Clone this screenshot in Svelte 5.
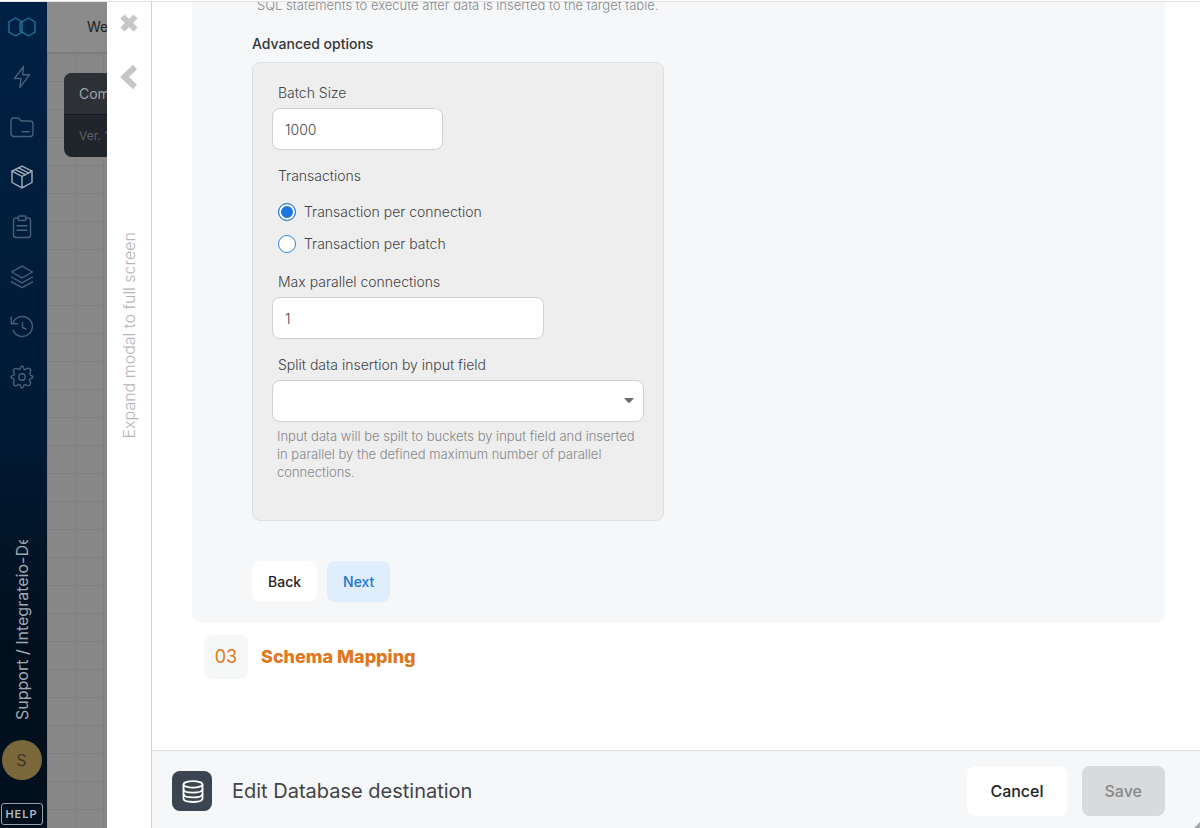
<script lang="ts">
  type TransactionMode = "connection" | "batch";

  interface NavItem {
    name: string;
    paths: string[];
    active?: boolean;
  }

  const navItems: NavItem[] = [
    {
      name: "Connections",
      paths: ["M13.5 1.5 L4.5 13.5 H11 L9.8 22.5 L19.5 9.8 H12.6 Z"],
    },
    {
      name: "Files",
      paths: [
        "M1 6 a3 3 0 0 1 3-3 h3.2 a3 3 0 0 1 2.4 1.2 l.8 1.1 a2 2 0 0 0 1.6.7 H20 a3 3 0 0 1 3 3 V18.5 a3 3 0 0 1-3 3 H4 a3 3 0 0 1-3-3 Z",
        "M12 16.8 H19",
      ],
    },
    {
      name: "Packages",
      active: true,
      paths: [
        "M12 1.2 L22 6.2 V17.5 L12 22.8 L2 17.5 V6.2 Z",
        "M2 6.2 L12 11.5 L22 6.2 M12 11.5 V22.8",
        "M5.3 4.6 L15.4 9.7 M8.6 2.9 L18.7 8",
      ],
    },
    {
      name: "Jobs",
      paths: [
        "M8 3 H6 a2.5 2.5 0 0 0-2.5 2.5 V20 A2.5 2.5 0 0 0 6 22.5 H18 a2.5 2.5 0 0 0 2.5-2.5 V5.5 A2.5 2.5 0 0 0 18 3 H16",
        "M9.5 1 H14.5 A1.5 1.5 0 0 1 16 2.5 V4 a1.5 1.5 0 0 1-1.5 1.5 H9.5 A1.5 1.5 0 0 1 8 4 V2.5 A1.5 1.5 0 0 1 9.5 1 Z",
        "M7 10.8 H17 M7 15.2 H17",
      ],
    },
    {
      name: "Layers",
      paths: [
        "M12 1.2 L22.5 7 L12 12.8 L1.5 7 Z",
        "M1.5 12 L12 17.8 L22.5 12",
        "M1.5 16.8 L12 22.6 L22.5 16.8",
      ],
    },
    {
      name: "History",
      paths: [
        "M3 8 A10 10 0 1 1 3.2 15.5",
        "M1.2 2.2 V8.7 H7.7",
        "M12.5 7.5 V12.5 L16 14",
      ],
    },
    {
      name: "Settings",
      paths: [
        "M10.4 3.4 Q10.8 1 12 1 Q13.2 1 13.6 3.4 Q14 4.8 15.4 4.4 Q15.9 4.2 16.5 3.8 Q18.4 2.6 19.6 3.6 Q21.4 4.8 20.2 7.5 Q19.2 9.2 20.4 10.2 Q23 10.8 23 12 Q23 13.2 20.6 13.6 Q19.2 14 19.6 15.4 Q21.4 18.4 20.2 19.6 Q19 21.2 16.5 20.2 Q14.8 19.2 13.8 20.4 Q13.2 23 12 23 Q10.8 23 10.4 20.6 Q10 19.2 8.6 19.6 Q5.6 21.4 4.4 20.2 Q2.8 19 3.8 16.5 Q4.8 14.8 3.6 13.8 Q1 13.2 1 12 Q1 10.8 3.4 10.4 Q4.8 10 4.4 8.6 Q2.6 5.6 3.8 4.4 Q5 2.8 7.5 3.8 Q9.6 5 10.4 3.4 Z",
        "M15.2 12 A3.2 3.2 0 1 1 8.8 12 A3.2 3.2 0 1 1 15.2 12",
      ],
    },
  ];

  let batchSize = $state("1000");
  let transactionMode = $state<TransactionMode>("connection");
  let maxConnections = $state("1");
  let splitField = $state("");
</script>

<div class="app">
  <aside class="sidebar">
    <a class="logo" href="#home" aria-label="Home">
      <svg width="28" height="20" viewBox="0 0 28 20">
        <path d="M7.5 1 L14 4.8 V15.2 L7.5 19 L1 15.2 V4.8 Z" />
        <path d="M20.5 1 L27 4.8 V15.2 L20.5 19 L14 15.2 L12 14 V6 L14 4.8 Z" />
      </svg>
    </a>
    <nav>
      {#each navItems as item (item.name)}
        <a class="nav-link" class:active={item.active} href="#{item.name}" aria-label={item.name}>
          <svg width="24" height="24" viewBox="0 0 24 24">
            {#each item.paths as d (d)}
              <path {d} />
            {/each}
          </svg>
        </a>
      {/each}
    </nav>
    <div class="account">Support / Integrateio-Dev</div>
    <div class="avatar">S</div>
    <button class="help" type="button">HELP</button>
  </aside>

  <div class="workspace">
    <header class="workspace-header">We</header>
    <div class="node">
      <div class="node-title">Com</div>
      <div class="node-version">Ver. 1</div>
    </div>
  </div>

  <div class="rail">
    <button type="button" aria-label="Close">
      <svg width="20" height="20" viewBox="0 0 20 20">
        <path d="M3.5 3.5 L16.5 16.5 M16.5 3.5 L3.5 16.5" />
      </svg>
    </button>
    <button type="button" aria-label="Collapse">
      <svg width="20" height="26" viewBox="0 0 20 26">
        <path d="M16 3 L5.5 13 L16 23" />
      </svg>
    </button>
    <button class="expand" type="button">Expand modal to full screen</button>
  </div>

  <main class="modal">
    <div class="modal-body">
      <section class="panel">
        <p class="hint">SQL statements to execute after data is inserted to the target table.</p>
        <h3>Advanced options</h3>
        <div class="options">
          <label class="label" for="batch-size">Batch Size</label>
          <input id="batch-size" class="control short" type="text" bind:value={batchSize} />

          <div class="label" id="transactions">Transactions</div>
          <div class="radios" role="radiogroup" aria-labelledby="transactions">
            <label class="radio">
              <input type="radio" name="transaction" value="connection" bind:group={transactionMode} />
              Transaction per connection
            </label>
            <label class="radio">
              <input type="radio" name="transaction" value="batch" bind:group={transactionMode} />
              Transaction per batch
            </label>
          </div>

          <label class="label" for="max-connections">Max parallel connections</label>
          <input id="max-connections" class="control medium" type="text" bind:value={maxConnections} />

          <label class="label" for="split-field">Split data insertion by input field</label>
          <div class="select">
            <select id="split-field" class="control" bind:value={splitField}>
              <option value=""></option>
            </select>
            <svg width="10" height="5" viewBox="0 0 10 5">
              <path d="M0 0 H10 L6 4.5 Q5 5.4 4 4.5 Z" />
            </svg>
          </div>
          <p class="hint">
            Input data will be spilt to buckets by input field and inserted in parallel by the
            defined maximum number of parallel connections.
          </p>
        </div>
        <div class="panel-actions">
          <button class="btn" type="button">Back</button>
          <button class="btn btn-next" type="button">Next</button>
        </div>
      </section>

      <div class="step">
        <span class="step-number">03</span>
        <h2>Schema Mapping</h2>
      </div>
    </div>

    <footer class="modal-footer">
      <span class="db-icon">
        <svg width="24" height="26" viewBox="0 0 24 26">
          <ellipse cx="13" cy="6.4" rx="9.5" ry="3.2" />
          <path d="M3.5 6.4 V20.6 C3.5 22.8 7.8 24 13 24 S22.5 22.8 22.5 20.6 V6.4" />
          <path d="M3.5 11.2 C3.5 13.4 7.8 14.6 13 14.6 S22.5 13.4 22.5 11.2" />
          <path d="M3.5 16 C3.5 18.2 7.8 19.4 13 19.4 S22.5 18.2 22.5 16" />
        </svg>
      </span>
      <h1>Edit Database destination</h1>
      <button class="btn btn-large" type="button">Cancel</button>
      <button class="btn btn-large btn-save" type="button" disabled>Save</button>
      <svg class="grip" width="6" height="6" viewBox="0 0 6 6">
        <path d="M6 0 V6 H0 Z" />
      </svg>
    </footer>
  </main>
</div>

<style>
  :global(body) {
    margin: 0;
  }

  .app {
    display: flex;
    box-sizing: border-box;
    height: 100vh;
    padding-top: 1px;
    overflow: hidden;
    background: #fff;
    color: #424446;
    font-family: Inter, sans-serif;
    font-size: 14px;
    line-height: 20px;
  }

  .app :global(*) {
    box-sizing: border-box;
  }

  h1,
  h2,
  h3,
  p {
    margin: 0;
  }

  button {
    padding: 0;
    border: 0;
    background: none;
    color: inherit;
    font: inherit;
    cursor: pointer;
  }

  svg {
    display: block;
  }

  /* Sidebar */
  .sidebar {
    display: flex;
    flex-direction: column;
    align-items: center;
    flex: 0 0 47px;
    padding: 0 4px 3px 0;
    border-top: 1px solid #e0e0e0;
    background: linear-gradient(#002144, #001a35 50%, #020f1c 80%);
  }

  .logo,
  .nav-link {
    display: flex;
    align-items: center;
    justify-content: center;
    width: 43px;
    height: 50px;
    fill: none;
    stroke: #48607a;
    stroke-width: 1.4;
    stroke-linecap: round;
    stroke-linejoin: round;
  }

  .logo {
    stroke: #1f7299;
  }

  .nav-link.active {
    stroke: #a3afba;
  }

  .account {
    height: 180px;
    margin-top: auto;
    overflow: hidden;
    color: #a0a8b1;
    font-size: 16px;
    line-height: 24px;
    white-space: nowrap;
    writing-mode: vertical-rl;
    transform: rotate(180deg);
  }

  .avatar {
    width: 40px;
    height: 40px;
    margin: 20px 0 23px;
    border-radius: 50%;
    background: #7b683a;
    color: #3c3628;
    font-size: 16px;
    line-height: 40px;
    text-align: center;
  }

  .help {
    width: 42px;
    height: 22px;
    border: 1px solid #9aa0a6;
    border-radius: 3px;
    color: #b3b7bb;
    font-size: 11px;
    font-weight: 600;
    letter-spacing: 1px;
  }

  /* Workspace behind the modal */
  .workspace {
    flex: 0 0 60px;
    overflow: hidden;
    border-top: 1px solid #e0e0e0;
    background-color: #878787;
    background-image: linear-gradient(#7e7f80 1px, transparent 1px),
      linear-gradient(90deg, #7e7f80 1px, transparent 1px);
    background-position: 0 23px;
    background-size: 28px 28px;
  }

  .workspace-header {
    height: 50px;
    padding-left: 40px;
    background: #8b8b8b;
    box-shadow: 0 1px 2px #777;
    color: #202122;
    line-height: 50px;
  }

  .node {
    width: 160px;
    margin: 21px 0 0 17px;
    border-radius: 8px;
    overflow: hidden;
    background: #20242b;
    color: #a2a3a5;
  }

  .node-title {
    height: 42px;
    padding-left: 15px;
    border-bottom: 1px solid #191b20;
    background: #2d3035;
    line-height: 42px;
  }

  .node-version {
    height: 42px;
    padding-left: 15px;
    color: #5f6268;
    font-size: 12px;
    line-height: 42px;
  }

  /* Modal rail */
  .rail {
    display: flex;
    flex-direction: column;
    align-items: center;
    flex: 0 0 45px;
    padding-top: 11px;
    border-top: 1px solid #e0e0e0;
    border-right: 1px solid #cfd2d4;
    fill: none;
    stroke: #c6c6c6;
    stroke-width: 6;
  }

  .rail button + button {
    margin-top: 31px;
  }

  .rail .expand {
    margin-top: 142px;
    color: #b5b5b5;
    font-size: 16px;
    font-weight: 300;
    white-space: nowrap;
    writing-mode: vertical-rl;
    transform: rotate(180deg);
  }

  /* Modal */
  .modal {
    display: flex;
    flex: 1;
    flex-direction: column;
    min-width: 0;
    border-top: 1px solid #e0e0e0;
  }

  .modal-body {
    display: flex;
    flex: 1;
    flex-direction: column;
    justify-content: flex-end;
    min-height: 0;
    padding: 0 35px 71px 40px;
    overflow: hidden;
  }

  .panel {
    padding: 20px 60px;
    border-radius: 8px;
    background: #f5f7f8;
  }

  .hint {
    padding: 0 5px;
    color: #858789;
    font-size: 13px;
    font-weight: 300;
    line-height: 18px;
  }

  h3 {
    margin: 20px 0 8px;
    color: #333537;
    font-size: 14px;
    font-weight: 500;
  }

  .options {
    max-width: 412px;
    padding: 20px 19px 39px;
    border: 1px solid #dcdfdf;
    border-radius: 8px;
    background: #eee;
  }

  .label {
    display: block;
    padding-left: 6px;
    font-weight: 300;
  }

  .control {
    display: block;
    width: 100%;
    height: 42px;
    margin: 5px 0 16px;
    padding: 0 12px;
    border: 1px solid #cfd1d1;
    border-radius: 8px;
    background: #fff;
    color: #424446;
    font: inherit;
    font-weight: 300;
  }

  .short {
    max-width: 171px;
  }

  .medium {
    max-width: 272px;
  }

  .select {
    position: relative;
  }

  .select .control {
    margin-bottom: 5px;
    appearance: none;
  }

  .select svg {
    position: absolute;
    top: 18px;
    right: 10px;
    fill: #6a6c6e;
    pointer-events: none;
  }

  .radios {
    padding: 10px 6px 12px;
  }

  .radio {
    display: flex;
    align-items: center;
    gap: 8px;
    height: 32px;
    font-weight: 300;
  }

  .radio input {
    width: 18px;
    height: 18px;
    margin: 0;
    border: 1px solid #2f86d6;
    border-radius: 50%;
    background: #fff;
    appearance: none;
  }

  .radio input:checked {
    border-color: #1a76e0;
    background: #1a76e0;
    box-shadow: inset 0 0 0 2px #fff;
  }

  .panel-actions {
    display: flex;
    gap: 10px;
    margin-top: 40px;
  }

  .btn {
    height: 41px;
    padding: 0 16px;
    border-radius: 8px;
    background: #fff;
    color: #222426;
    font-weight: 500;
  }

  .btn-next {
    background: #dfedfd;
    color: #1976d2;
  }

  .step {
    display: flex;
    align-items: center;
    gap: 13px;
    margin: 13px 0 0 12px;
    color: #e0771c;
  }

  .step-number {
    width: 44px;
    height: 44px;
    border-radius: 8px;
    background: #f6f7f7;
    font-size: 18px;
    line-height: 44px;
    text-align: center;
  }

  h2 {
    font-size: 18px;
    font-weight: 800;
  }

  /* Footer */
  .modal-footer {
    position: relative;
    display: flex;
    align-items: center;
    height: 78px;
    padding: 3px 35px 0 20px;
    border-top: 1px solid #dfe2e3;
    background: #f5f7f8;
  }

  .db-icon {
    display: flex;
    align-items: center;
    justify-content: center;
    width: 40px;
    height: 40px;
    border-radius: 8px;
    background: #3b4552;
    fill: none;
    stroke: #fff;
    stroke-width: 1.8;
  }

  h1 {
    flex: 1;
    padding-left: 20px;
    font-size: 20px;
    font-weight: 400;
  }

  .btn-large {
    height: 50px;
    padding: 0 23px;
    font-size: 16px;
  }

  .btn-save {
    margin-left: 15px;
    background: #d9dadb;
    color: #87898b;
  }

  .grip {
    position: absolute;
    right: 0;
    bottom: 0;
    fill: #a5a7a8;
  }
</style>
